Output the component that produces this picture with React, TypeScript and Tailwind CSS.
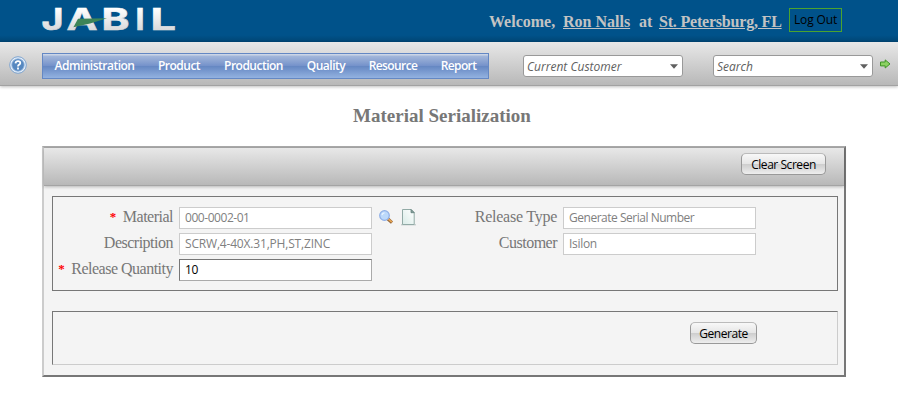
import React from "react";

const sans = "font-['Open_Sans','Noto_Sans',sans-serif]";
const serif = "font-['Liberation_Serif',serif]";

function Logo() {
  return (
    <svg width="140" height="42" viewBox="0 0 140 42" className="block overflow-visible" aria-label="Jabil">
      <defs>
        <linearGradient id="silver" gradientUnits="userSpaceOnUse" x1="0" y1="8" x2="0" y2="31">
          <stop offset="0" stopColor="#ffffff" />
          <stop offset="1" stopColor="#d8d8da" />
        </linearGradient>
      </defs>
      <g fill="url(#silver)" stroke="url(#silver)" strokeWidth="0.6" fontFamily="Inter, sans-serif" fontWeight="700" fontSize="30.5">
        <text x="0.5" y="30.4" textLength="22" lengthAdjust="spacingAndGlyphs">J</text>
        <text x="25.5" y="30.4" textLength="31" lengthAdjust="spacingAndGlyphs">A</text>
        <text x="60.5" y="30.4" textLength="28" lengthAdjust="spacingAndGlyphs">B</text>
        <text x="94.5" y="30.4" textLength="9" lengthAdjust="spacingAndGlyphs">I</text>
        <text x="109.5" y="30.4" textLength="25.5" lengthAdjust="spacingAndGlyphs">L</text>
      </g>
      <polygon points="37,18.7 66,18.2 49,23.6 32.4,27.2" fill="#3d8458" />
    </svg>
  );
}

function HelpIcon() {
  return (
    <svg width="18" height="18" viewBox="0 0 18 18" className="block">
      <circle cx="9" cy="9" r="8.3" fill="#e3edf8" stroke="#7ea4cf" />
      <circle cx="9" cy="9" r="6.2" fill="#5688c0" stroke="#8fb3dc" strokeWidth="0.8" />
      <path d="M6.5 7.4Q6.7 5.2 9 5.2Q11.3 5.2 11.3 7Q11.3 8.2 9.9 8.8Q9 9.3 9 10.4M9 11.6v1.8" fill="none" stroke="#fff" strokeWidth="1.8" />
    </svg>
  );
}

function ArrowIcon() {
  return (
    <svg width="11" height="10" viewBox="0 0 11 10" className="block">
      <path d="M.5 3h4.7V.9L10 4.9 5.2 9V6.9H.5z" fill="#8bd162" stroke="#3f9426" />
    </svg>
  );
}

function MagnifierIcon() {
  return (
    <svg width="14" height="14" viewBox="0 0 14 14" className="block">
      <path d="M9 9l4 3.7" stroke="#8f6238" strokeWidth="3.2" />
      <path d="M9 8.6l3.9 3.6" stroke="#e8a552" strokeWidth="1.8" />
      <circle cx="5.5" cy="5.5" r="4.8" fill="#bcd9fb" stroke="#8eaee6" strokeWidth="1.2" />
      <path d="M3 5q.4-2 2.5-2.2" stroke="#e6f2ff" strokeWidth="1.3" fill="none" />
    </svg>
  );
}

function PageIcon() {
  return (
    <svg width="15" height="17" viewBox="0 0 15 17" className="block">
      <defs>
        <linearGradient id="paper" x1="1" y1="0" x2="0" y2="1">
          <stop offset="0" stopColor="#fff" />
          <stop offset="1" stopColor="#d9ebe7" />
        </linearGradient>
      </defs>
      <path d="M0 15.8h15" stroke="#b9c3c1" />
      <path d="M1.5.5h8.7l3 3v12H1.5z" fill="url(#paper)" stroke="#92aaa6" />
      <path d="M10 .5v3.2h3.2z" fill="#8ca39f" stroke="#607d78" strokeWidth="0.8" />
    </svg>
  );
}

const menu = [
  { label: "Administration", size: "w-[103px] tracking-[-0.5px]" },
  { label: "Product", size: "w-[66px] tracking-[-0.5px]" },
  { label: "Production", size: "w-[83px] tracking-[-0.5px]" },
  { label: "Quality", size: "w-[62px] tracking-[-0.5px]" },
  { label: "Resource", size: "w-[72px] tracking-[-0.6px]" },
  { label: "Report", size: "w-[59px] tracking-[-0.6px]" },
];

function Combo({ text }: { text: string }) {
  return (
    <div className={`flex h-[22px] w-[160px] items-center justify-between rounded-[3px] border border-[#999] bg-white pr-1 pl-[3px] text-[12px] leading-5 text-[#606060] italic ${sans}`}>
      <span className="pt-px whitespace-nowrap">{text}</span>
      <svg width="8" height="5" viewBox="0 0 8 5"><path d="M0 .3h8L4 4.7z" fill="#606060" /></svg>
    </div>
  );
}

function Label({ children, required = false, tracking = "tracking-[-0.5px]" }: { children: React.ReactNode; required?: boolean; tracking?: string }) {
  return (
    <div className={`text-right text-[16px] leading-[20px] whitespace-nowrap text-[#777] ${serif} ${tracking}`}>
      {required && <span className="mr-[7px] align-[1px] text-[13px] leading-none font-bold text-[#f00]">*</span>}
      {children}
    </div>
  );
}

function Field({ value, look }: { value: string; look: string }) {
  return (
    <input
      readOnly
      value={value}
      className={`block h-[22px] w-[193px] border bg-white px-[5px] pb-px text-[12px] leading-5 outline-none ${sans} ${look}`}
    />
  );
}

const locked = "border-[#ccc] text-[#808080]";

function Button({ children, className }: { children: React.ReactNode; className: string }) {
  return (
    <button className={`h-[22px] rounded-[5px] border border-x-[#999] border-t-[#bbb] border-b-[#999] bg-[linear-gradient(#f8f8f8_0%,#e6e6e6_48%,#cecece_52%,#eee_100%)] pt-px text-[12px] leading-5 tracking-[-0.45px] whitespace-nowrap text-black ${sans} ${className}`}>
      {children}
    </button>
  );
}

export default function App() {
  return (
    <div className="flex h-[405px] w-[898px] flex-col overflow-hidden bg-white">
      <header className="flex h-[42px] shrink-0 items-start bg-[linear-gradient(#00528a_0%,#00528a_84%,#004573_100%)] pl-[41px]">
        <div className="w-[448px]"><Logo /></div>
        <div className={`mt-[11px] flex w-[300px] text-[16px] leading-[22px] font-bold whitespace-nowrap text-[#c3c3c3] ${serif}`}>
          <span className="w-[74px] shrink-0">Welcome,</span>
          <span className="w-[76px] shrink-0"><a className="underline">Ron Nalls</a></span>
          <span className="w-[20px] shrink-0">at</span>
          <a className="tracking-[-0.2px] underline">St. Petersburg, FL</a>
        </div>
        <button className={`mt-2 h-6 w-[53px] border border-[#4ca32f] text-[12px] leading-[22px] tracking-[-0.15px] whitespace-nowrap text-black ${sans}`}>Log Out</button>
      </header>

      <div className="flex h-[44px] shrink-0 items-start border-b border-[#a2a2a2] bg-[linear-gradient(#e8e8e8,#b8b8b8)] shadow-[0_1px_3px_rgba(0,0,0,0.25)]">
        <div className="mt-[14px] ml-[9px] w-[33px]"><HelpIcon /></div>
        <nav className={`mt-[11px] flex h-[26px] w-[447px] border border-[#6488c4] bg-[linear-gradient(#cbd5e6_0,#cbd5e6_1px,#a3b7da_2px,#7693cb_48%,#6688c3_52%,#93b2e0_100%)] pt-px text-[12px] leading-[22px] font-semibold text-white ${sans}`}>
          {menu.map((item) => (
            <a key={item.label} className={`shrink-0 text-center whitespace-nowrap ${item.size}`}>{item.label}</a>
          ))}
        </nav>
        <div className="mt-[13px] ml-[34px]"><Combo text="Current Customer" /></div>
        <div className="mt-[13px] ml-[30px]"><Combo text="Search" /></div>
        <div className="mt-[17px] ml-[7px]"><ArrowIcon /></div>
      </div>

      <h1 className={`mt-[18px] h-[24px] pr-[14px] text-center text-[19px] leading-6 font-bold text-[#777] ${serif}`}>Material Serialization</h1>

      <main className="mt-[18px] ml-[42px] h-[231px] w-[804px] border-2 border-t-[#aaa] border-r-[#777] border-b-[#777] border-l-[#ccc] bg-[#f4f4f4]">
        <div className="flex h-[38px] justify-end border-b border-[#a4a4a4] bg-[linear-gradient(#e8e8e8,#b8b8b8)] pt-[5px] pr-[18px] shadow-[0_1px_3px_rgba(0,0,0,0.25)]">
          <Button className="w-[85px]">Clear Screen</Button>
        </div>
        <section className="mt-[10px] ml-2 flex h-[95px] w-[786px] items-start border border-[#777] pt-[10px]">
          <div className="grid grid-cols-[120px_193px] gap-x-[6px] gap-y-1">
            <Label required>Material</Label><Field value="000-0002-01" look={`${locked} tracking-[-0.45px]`} />
            <Label>Description</Label><Field value="SCRW,4-40X.31,PH,ST,ZINC" look={`${locked} tracking-[-0.18px]`} />
            <Label required>Release Quantity</Label><Field value="10" look="border-t-[#777] border-l-[#777] border-r-[#aaa] border-b-[#aaa] text-black tracking-[-0.3px]" />
          </div>
          <div className="mt-[3px] ml-[7px]"><MagnifierIcon /></div>
          <div className="mt-[2px] ml-2"><PageIcon /></div>
          <div className="ml-[41px] grid grid-cols-[100px_193px] gap-x-[6px] gap-y-1">
            <Label tracking="tracking-[-0.25px]">Release Type</Label><Field value="Generate Serial Number" look={`${locked} tracking-[-0.48px]`} />
            <Label>Customer</Label><Field value="Isilon" look={`${locked} tracking-[-0.3px]`} />
          </div>
        </section>
        <section className="mt-5 ml-2 flex h-[54px] w-[786px] justify-end border border-t-[#777] border-r-[#ccc] border-b-[#ccc] border-l-[#777] pt-[10px] pr-[80px]">
          <Button className="w-[67px]">Generate</Button>
        </section>
      </main>
    </div>
  );
}
